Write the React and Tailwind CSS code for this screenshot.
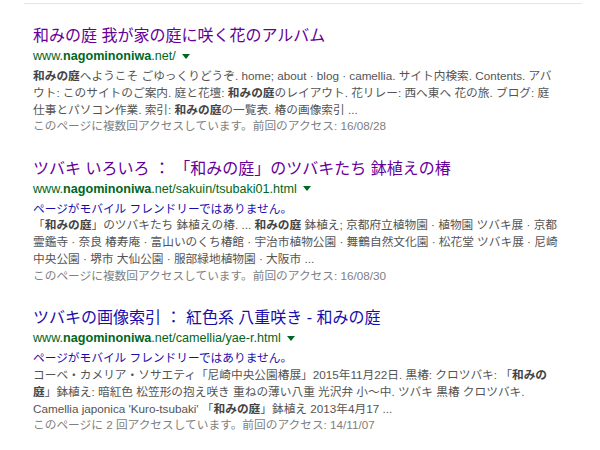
import React from "react";

const Caret = () => (
  <svg width="8" height="5" viewBox="0 0 8 5" className="ml-[6px] inline-block align-middle">
    <path d="M0 0 L8 0 L4 5 Z" fill="#006621" />
  </svg>
);

const B = ({ children }) => <b className="font-bold text-[#444]">{children}</b>;

function Url({ path }) {
  return (
    <div className="h-[20px] leading-[20px] text-[12.6px] text-[#006621] whitespace-nowrap flex items-center">
      <span>
        www.<b className="font-bold">nagominoniwa</b>.net/{path}
      </span>
      <Caret />
    </div>
  );
}

function Title({ children, color }) {
  return (
    <div className={`h-[20px] leading-[20px] text-[16px] whitespace-nowrap ${color}`}>{children}</div>
  );
}

function Line({ children, gray }) {
  return (
    <div className={`h-[16.8px] leading-[16.8px] whitespace-nowrap ${gray ? "text-[#808080]" : "text-[#545454]"}`}>
      {children}
    </div>
  );
}

function Mobile() {
  return (
    <div className="h-[16.8px] leading-[16.8px] whitespace-nowrap text-[#1a0dab]">
      ページがモバイル フレンドリーではありません。
    </div>
  );
}

export default function App() {
  return (
    <div className="w-[600px] h-[450px] bg-white overflow-hidden font-['Liberation_Sans','Noto_Sans_CJK_JP',sans-serif]">
      <div className="ml-[24px] mt-[3px] w-[558px] border-t border-[#e6e6e6]" />
      <div className="pl-[33px] pt-[22px] flex flex-col gap-[23.5px]">
        <div className="flex flex-col">
          <Title color="text-[#660099]">和みの庭 我が家の庭に咲く花のアルバム</Title>
          <Url path="" />
          <div className="mt-[2px] text-[11.7px]">
            <Line>
              <B>和みの庭</B>へようこそ ごゆっくりどうぞ. home; about · blog · camellia. サイト内検索. Contents. アバ
            </Line>
            <Line>
              ウト: このサイトのご案内. 庭と花壇: <B>和みの庭</B>のレイアウト. 花リレー: 西へ東へ 花の旅. ブログ: 庭
            </Line>
            <Line>
              仕事とパソコン作業. 索引: <B>和みの庭</B>の一覧表. 椿の画像索引 ...
            </Line>
            <Line gray>このページに複数回アクセスしています。前回のアクセス: 16/08/28</Line>
          </div>
        </div>

        <div className="flex flex-col">
          <Title color="text-[#660099]">ツバキ いろいろ ： 「和みの庭」のツバキたち 鉢植えの椿</Title>
          <Url path="sakuin/tsubaki01.html" />
          <div className="mt-[2px] text-[11.7px]">
            <Mobile />
            <Line>
              「<B>和みの庭</B>」のツバキたち 鉢植えの椿. ... <B>和みの庭</B> 鉢植え; 京都府立植物園 · 植物園 ツバキ展 · 京都
            </Line>
            <Line>
              霊鑑寺 · 奈良 椿寿庵 · 富山いのくち椿館 · 宇治市植物公園 · 舞鶴自然文化園 · 松花堂 ツバキ展 · 尼崎
            </Line>
            <Line>中央公園 · 堺市 大仙公園 · 服部緑地植物園 · 大阪市 ...</Line>
            <Line gray>このページに複数回アクセスしています。前回のアクセス: 16/08/30</Line>
          </div>
        </div>

        <div className="flex flex-col">
          <Title color="text-[#1a0dab]">ツバキの画像索引 ： 紅色系 八重咲き - 和みの庭</Title>
          <Url path="camellia/yae-r.html" />
          <div className="mt-[2px] text-[11.7px]">
            <Mobile />
            <Line>
              コーベ・カメリア・ソサエティ「尼崎中央公園椿展」2015年11月22日. 黒椿: クロツバキ: 「<B>和みの</B>
            </Line>
            <Line>
              <B>庭</B>」鉢植え: 暗紅色 松笠形の抱え咲き 重ねの薄い八重 光沢弁 小～中. ツバキ 黒椿 クロツバキ.
            </Line>
            <Line>
              Camellia japonica 'Kuro-tsubaki' 「<B>和みの庭</B>」鉢植え 2013年4月17 ...
            </Line>
            <Line gray>このページに 2 回アクセスしています。前回のアクセス: 14/11/07</Line>
          </div>
        </div>
      </div>
    </div>
  );
}
